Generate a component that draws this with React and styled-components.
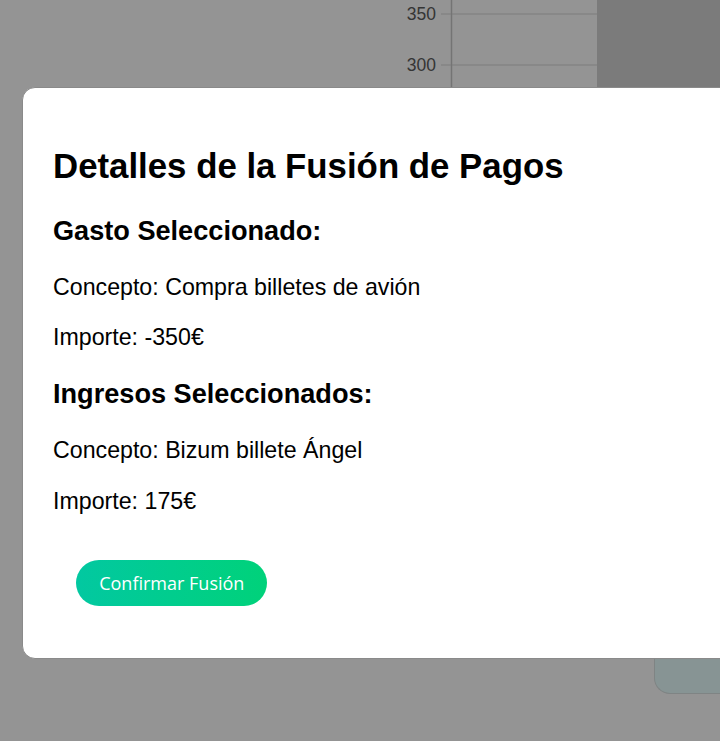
import React from "react";
import styled, { createGlobalStyle } from "styled-components";

const Global = createGlobalStyle`
  html, body { margin: 0; padding: 0; background: #ffffff; overflow: hidden; }
  body { width: 720px; height: 741px; font-family: "Liberation Sans", Arial, sans-serif; }
  * { box-sizing: border-box; }
`;

const Page = styled.div`
  width: 720px;
  height: 741px;
  display: flex;
  flex-direction: column;
  overflow: hidden;
`;

const ChartArea = styled.svg`
  display: block;
  width: 720px;
  height: 110px;
  flex: none;
`;

const Spacer = styled.div`
  flex: 1;
`;

const CardRow = styled.div`
  display: flex;
  justify-content: flex-end;
  margin-bottom: 47px;
`;

const InfoCard = styled.div`
  width: 66px;
  height: 120px;
  background: #e8ffff;
  border-left: 1px solid #dbe3e3;
  border-bottom: 1px solid #dbe3e3;
  border-bottom-left-radius: 16px;
`;

const Overlay = styled.div`
  position: fixed;
  inset: 0;
  background: rgba(0, 0, 0, 0.42);
`;

const Modal = styled.div`
  position: fixed;
  top: 87px;
  left: 22px;
  width: 780px;
  background: #ffffff;
  border: 1px solid #8a8a8a;
  border-radius: 13px;
  padding: 29px 30px 30.5px;
  font-family: "Liberation Sans", Arial, sans-serif;
  font-size: 23.2px;
  color: #000000;
`;

const Title = styled.h2`
  font-size: 1.5em;
  font-weight: 700;
  margin: 0.83em 0;
`;

const SectionTitle = styled.h3`
  font-size: 1.17em;
  font-weight: 700;
  margin: 1em 0;
`;

const Line = styled.p`
  margin: 1em 0;
  font-size: 1em;
`;

const Actions = styled.div`
  display: flex;
`;

const ConfirmButton = styled.button`
  margin: 22px 23.2px;
  height: 46px;
  padding: 0 23px;
  border: none;
  border-radius: 23px;
  background: linear-gradient(90deg, #02c8a1 0%, #00d27a 100%);
  color: #ffffff;
  font-family: "Open Sans", "Noto Sans", sans-serif;
  font-size: 18px;
  cursor: pointer;
`;

const sections = [
  {
    title: "Gasto Seleccionado:",
    concepto: "Compra billetes de avión",
    importe: "-350€",
  },
  {
    title: "Ingresos Seleccionados:",
    concepto: "Bizum billete Ángel",
    importe: "175€",
  },
];

export default function App() {
  return (
    <>
      <Global />
      <Page>
        <ChartArea viewBox="0 0 720 110">
          <rect x="597" y="0" width="123" height="110" fill="#d4d4d4" />
          <line x1="441" y1="14" x2="597" y2="14" stroke="#e5e5e5" strokeWidth="1.5" />
          <line x1="441" y1="65" x2="597" y2="65" stroke="#e5e5e5" strokeWidth="1.5" />
          <line x1="451.5" y1="0" x2="451.5" y2="110" stroke="#c8c8c8" strokeWidth="1.5" />
          <text x="436" y="20" textAnchor="end" fontFamily="Liberation Sans, Arial, sans-serif" fontSize="17.5" fill="#5c5c5c">350</text>
          <text x="436" y="71" textAnchor="end" fontFamily="Liberation Sans, Arial, sans-serif" fontSize="17.5" fill="#5c5c5c">300</text>
        </ChartArea>
        <Spacer />
        <CardRow>
          <InfoCard />
        </CardRow>
      </Page>
      <Overlay />
      <Modal>
        <Title>Detalles de la Fusión de Pagos</Title>
        {sections.map((s) => (
          <React.Fragment key={s.title}>
            <SectionTitle>{s.title}</SectionTitle>
            <Line>Concepto: {s.concepto}</Line>
            <Line>Importe: {s.importe}</Line>
          </React.Fragment>
        ))}
        <Actions>
          <ConfirmButton>Confirmar Fusión</ConfirmButton>
        </Actions>
      </Modal>
    </>
  );
}
